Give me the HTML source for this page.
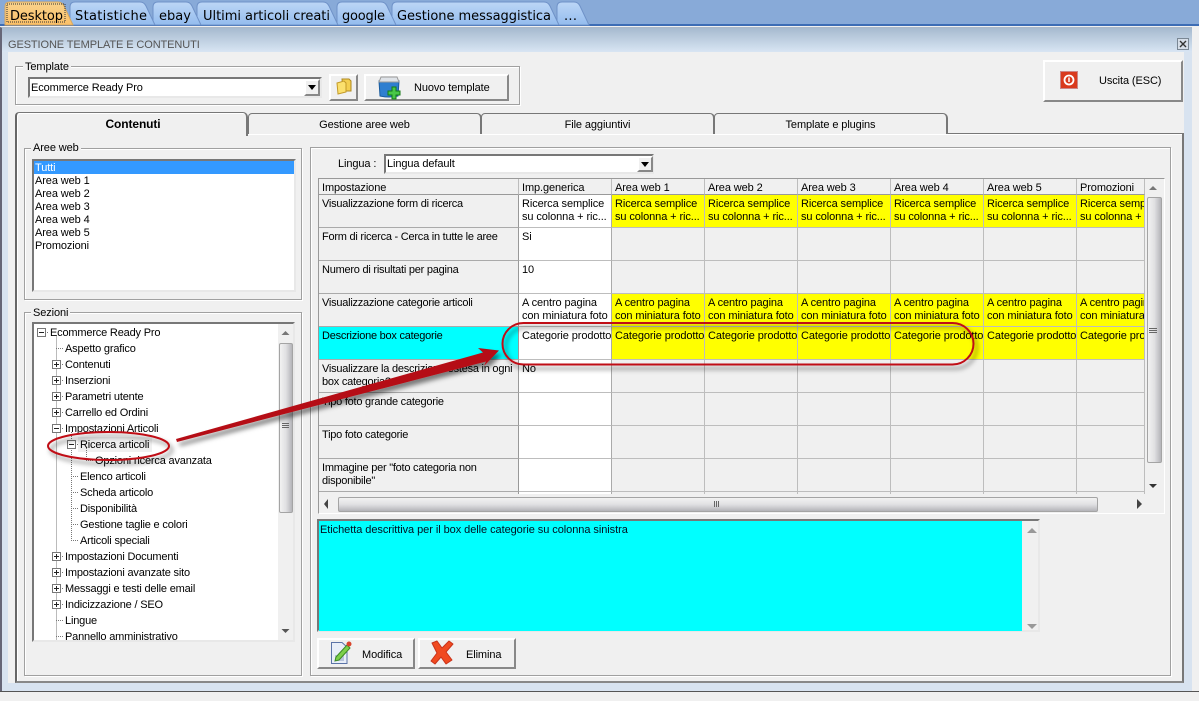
<!DOCTYPE html>
<html><head><meta charset="utf-8"><style>
html,body{margin:0;padding:0;width:1199px;height:701px;overflow:hidden;background:#f0f0f0}
body{position:relative;font:11px/13px "Liberation Sans",sans-serif;letter-spacing:-.1px;color:#000}
div,span.t{position:absolute;box-sizing:border-box}
.t{white-space:nowrap;padding-top:1px}
.grp{border:1px solid #a0a0a0;box-shadow:1px 1px 0 #fff,inset 1px 1px 0 #fff}
.lg{background:#f0f0f0;padding:1px 2px 0;height:13px}
.sunk{background:#fff;border:2px solid;border-color:#777 #e8e8e8 #e8e8e8 #777}
.btn{background:#f0f0f0;border:2px solid;border-color:#fff #888 #888 #fff}
.tab{background:#f0f0f0;border:1px solid #777;border-bottom:0;border-right:2px solid #777;border-radius:4px 5px 0 0;text-align:center;padding-top:5px}
.vthumb{background:linear-gradient(90deg,#f2f2f2,#e0e0e2 50%,#b4b4b9);border:1px solid #a4a4a4;border-radius:2px}
.hthumb{background:linear-gradient(180deg,#f2f2f2,#e0e0e2 50%,#b4b4b9);border:1px solid #a4a4a4;border-radius:2px}
table{border-collapse:separate;border-spacing:0;table-layout:fixed;position:absolute;left:0;top:0;width:826px}
td{height:33px;padding:3px 3px 0;vertical-align:top;border-right:1px solid #bdbdbd;border-bottom:1px solid #bdbdbd;overflow:hidden;white-space:nowrap;background:#f0f0f0;box-sizing:border-box}
tr.h td{height:16px;padding:3px 3px 0;line-height:12px;border-bottom:1px solid #999;border-right:1px solid #bdbdbd}
td.f{border-right:1px solid #999;border-bottom:1px solid #aaa;padding-right:0;letter-spacing:-.24px}
td.w{background:#fff;border-right-color:#aaa}
td.y{background:#ff0}
td.c{background:#0ff}
.tree .t{line-height:16px;height:17px;letter-spacing:-.18px}
</style></head><body>

<!-- top tabs -->
<div style="left:0;top:0;width:1199px;height:24px;background:#88aad8"></div>
<div style="left:0;top:24px;width:1199px;height:2px;background:#3d6db5"></div>
<svg style="position:absolute;left:0;top:0" width="600" height="26">
<defs>
<linearGradient id="tb" x1="0" y1="0" x2="0" y2="1"><stop offset="0" stop-color="#bcd6f6"/><stop offset="1" stop-color="#94bcee"/></linearGradient>
<linearGradient id="to" x1="0" y1="0" x2="0" y2="1"><stop offset="0" stop-color="#fad38c"/><stop offset="1" stop-color="#fbc068"/></linearGradient>
</defs>
<g fill="url(#tb)" stroke="#6f92c8">
<path d="M557 25V7Q557 2 562 2H574Q578 2 580 6L589 25Z"/>
<path d="M392 25V7Q392 2 397 2H544Q548 2 550 6L559 25Z"/>
<path d="M337 25V7Q337 2 342 2H381Q385 2 387 6L396 25Z"/>
<path d="M197 25V7Q197 2 202 2H323Q327 2 329 6L338 25Z"/>
<path d="M153 25V7Q153 2 158 2H186Q190 2 192 6L201 25Z"/>
<path d="M70 25V7Q70 2 75 2H140Q144 2 146 6L155 25Z"/>
</g>
<path d="M5 25V7Q5 2 10 2H58Q62 2 64 6L73 25Z" fill="url(#to)" stroke="#d7a860"/>
<rect x="7" y="4" width="58" height="18" fill="none" stroke="#333" stroke-dasharray="1 1"/>
<g font-family="DejaVu Sans,sans-serif" font-size="13" letter-spacing="0">
<text x="10" y="20" textLength="53">Desktop</text>
<text x="75" y="20" textLength="72">Statistiche</text>
<text x="159" y="20" textLength="32">ebay</text>
<text x="203" y="20" textLength="127">Ultimi articoli creati</text>
<text x="342" y="20" textLength="43">google</text>
<text x="397" y="20" textLength="154">Gestione messaggistica</text>
<text x="564" y="20" textLength="13">...</text>
</g>
</svg>

<!-- window -->
<div style="left:0;top:27px;width:1192px;height:664px;background:#d8e3f0;border-top:1px solid #aab8c8;border-left:2px solid #667"></div>
<div style="left:2px;top:28px;width:1190px;height:24px;background:linear-gradient(180deg,#a6bacf,#d8e5f3)"></div>
<div style="left:8px;top:52px;width:1176px;height:631px;background:#f0f0f0"></div>
<div style="left:0;top:691px;width:1199px;height:1px;background:#555"></div>
<span class="t" style="left:8px;top:38px;color:#555">GESTIONE TEMPLATE E CONTENUTI</span>
<svg style="position:absolute;left:1177px;top:38px" width="12" height="12"><rect x=".5" y=".5" width="11" height="11" fill="#d6dee8" stroke="#7a8794"/><path d="M3 3L9 9M9 3L3 9" stroke="#333" stroke-width="1.4"/></svg>

<!-- template group -->
<div class="grp" style="left:15px;top:66px;width:505px;height:39px"></div>
<span class="t lg" style="left:23px;top:60px">Template</span>
<div class="sunk" style="left:28px;top:77px;width:294px;height:21px"></div>
<span class="t" style="left:31px;top:81px">Ecommerce Ready Pro</span>
<div class="btn" style="left:304px;top:79px;width:16px;height:17px"></div>
<svg style="position:absolute;left:306px;top:81px" width="12" height="12"><path d="M2 4H10L6 9Z" fill="#000"/></svg>
<div class="btn" style="left:329px;top:74px;width:29px;height:27px"></div>
<svg style="position:absolute;left:335px;top:78px" width="18" height="19"><path d="M7 1H14L16 3V13H8Z" fill="#f3cf50" stroke="#b08a20"/><path d="M2 5L9 3L11 5V14L3 16Z" fill="#fbe06e" stroke="#c39a28"/></svg>
<div class="btn" style="left:364px;top:74px;width:145px;height:27px"></div>
<svg style="position:absolute;left:377px;top:75px" width="26" height="25"><path d="M2 6H22L21 21Q12 23 3 21Z" fill="#2f7fd0" stroke="#1a5c9e"/><path d="M4 2H20L22 7H2Z" fill="#dfe3e8" stroke="#999"/><path d="M15 12h4v4h4v4h-4v4h-4v-4h-4v-4h4z" fill="#48c848" stroke="#157a15"/></svg>
<span class="t" style="left:414px;top:81px">Nuovo template</span>
<div class="btn" style="left:1043px;top:60px;width:140px;height:42px"></div>
<svg style="position:absolute;left:1060px;top:71px" width="18" height="18"><rect x=".5" y=".5" width="17" height="17" fill="#d93a1e" stroke="#c88"/><circle cx="9" cy="9" r="4.5" fill="none" stroke="#fff" stroke-width="1.8"/><path d="M9 6.5V11" stroke="#fff" stroke-width="1.5"/></svg>
<span class="t" style="left:1099px;top:74px">Uscita (ESC)</span>

<!-- page tabs -->
<div style="left:15px;top:133px;width:1169px;height:550px;border:2px solid #777;border-top:1px solid #777;border-left:2px solid #666;border-bottom:2px solid #888;box-shadow:inset 1px 1px 0 #fff"></div>
<div class="tab" style="left:248px;top:113px;width:234px;height:21px">Gestione aree web</div>
<div class="tab" style="left:481px;top:113px;width:234px;height:21px">File aggiuntivi</div>
<div class="tab" style="left:714px;top:113px;width:234px;height:21px">Template e plugins</div>
<div class="tab" style="left:15px;top:112px;width:233px;height:24px;border-bottom:0;border-left:2px solid #666;font-weight:bold;font-size:12px;padding:5px 0 0 3px;box-shadow:inset 1px 1px 0 #fff;letter-spacing:-.1px">Contenuti</div>

<!-- left groups -->
<div class="grp" style="left:24px;top:148px;width:278px;height:152px"></div>
<span class="t lg" style="left:31px;top:141px">Aree web</span>
<div class="sunk" style="left:32px;top:159px;width:264px;height:133px"></div>
<div style="left:34px;top:161px;width:260px;height:13px;background:#3399ff"></div>
<span class="t" style="left:35px;top:161px;color:#fff">Tutti</span>
<span class="t" style="left:35px;top:174px">Area web 1</span>
<span class="t" style="left:35px;top:187px">Area web 2</span>
<span class="t" style="left:35px;top:200px">Area web 3</span>
<span class="t" style="left:35px;top:213px">Area web 4</span>
<span class="t" style="left:35px;top:226px">Area web 5</span>
<span class="t" style="left:35px;top:239px">Promozioni</span>

<div class="grp" style="left:24px;top:312px;width:278px;height:364px"></div>
<span class="t lg" style="left:31px;top:306px">Sezioni</span>

<div class="sunk tree" style="left:32px;top:322px;width:263px;height:320px;overflow:hidden"></div>
<div style="left:34px;top:324px;width:244px;height:316px;overflow:hidden;background:#fff" class="tree">
<div style="left:44px;top:113px;width:74px;height:15px;background:#f0f0f0"></div>
<svg style="position:absolute;left:-34px;top:-324px" width="300" height="660">
<g stroke="#777" stroke-dasharray="1 1" fill="none">
<path d="M56.500 336.500V640M45 332.500H49M56 348.500H64M60 364.500H64M60 380.500H64M60 396.500H64M60 412.500H64M60 428.500H64M60 556.500H64M60 572.500H64M60 588.500H64M60 604.500H64M56 620.500H64M56 636.500H64"/>
<path d="M71.500 432V540.500M75 444.500H79M86.500 448V460.500H94M71 476.500H79M71 492.500H79M71 508.500H79M71 524.500H79M71 540.500H79"/>
</g>
<g fill="#fff" stroke="#777">
<rect x="37.500" y="328.500" width="8" height="8"/>
<rect x="52.500" y="360.500" width="8" height="8"/><rect x="52.500" y="376.500" width="8" height="8"/><rect x="52.500" y="392.500" width="8" height="8"/><rect x="52.500" y="408.500" width="8" height="8"/><rect x="52.500" y="424.500" width="8" height="8"/>
<rect x="67.500" y="440.500" width="8" height="8"/>
<rect x="52.500" y="552.500" width="8" height="8"/><rect x="52.500" y="568.500" width="8" height="8"/><rect x="52.500" y="584.500" width="8" height="8"/><rect x="52.500" y="600.500" width="8" height="8"/>
</g>
<g stroke="#222" fill="none">
<path d="M39 332.500H44M54 364.500H59M54 380.500H59M54 396.500H59M54 412.500H59M54 428.500H59M69 444.500H74M54 556.500H59M54 572.500H59M54 588.500H59M54 604.500H59"/>
<path d="M56.500 362V367M56.500 378V383M56.500 394V399M56.500 410V415M56.500 554V559M56.500 570V575M56.500 586V591M56.500 602V607"/>
</g>
</svg>
<span class="t" style="left:16px;top:0">Ecommerce Ready Pro</span>
<span class="t" style="left:31px;top:16px">Aspetto grafico</span>
<span class="t" style="left:31px;top:32px">Contenuti</span>
<span class="t" style="left:31px;top:48px">Inserzioni</span>
<span class="t" style="left:31px;top:64px">Parametri utente</span>
<span class="t" style="left:31px;top:80px">Carrello ed Ordini</span>
<span class="t" style="left:31px;top:96px">Impostazioni Articoli</span>
<span class="t" style="left:46px;top:112px">Ricerca articoli</span>
<span class="t" style="left:61px;top:128px">Opzioni ricerca avanzata</span>
<span class="t" style="left:46px;top:144px">Elenco articoli</span>
<span class="t" style="left:46px;top:160px">Scheda articolo</span>
<span class="t" style="left:46px;top:176px">Disponibilità</span>
<span class="t" style="left:46px;top:192px">Gestione taglie e colori</span>
<span class="t" style="left:46px;top:208px">Articoli speciali</span>
<span class="t" style="left:31px;top:224px">Impostazioni Documenti</span>
<span class="t" style="left:31px;top:240px">Impostazioni avanzate sito</span>
<span class="t" style="left:31px;top:256px">Messaggi e testi delle email</span>
<span class="t" style="left:31px;top:272px">Indicizzazione / SEO</span>
<span class="t" style="left:31px;top:288px">Lingue</span>
<span class="t" style="left:31px;top:304px">Pannello amministrativo</span>
</div>
<div style="left:278px;top:324px;width:15px;height:316px;background:#f0f0f0"></div>
<div class="vthumb" style="left:279px;top:343px;width:14px;height:170px"></div>
<svg style="position:absolute;left:278px;top:324px" width="15" height="316"><path d="M3.500 11H11.500L7.500 7Z" fill="#777"/><path d="M3.500 305H11.500L7.500 309Z" fill="#555"/><path d="M4 99.500H11M4 101.500H11M4 103.500H11" stroke="#666"/></svg>

<!-- right group -->
<div class="grp" style="left:310px;top:147px;width:861px;height:529px"></div>
<span class="t" style="left:338px;top:157px">Lingua :</span>
<div class="sunk" style="left:384px;top:154px;width:270px;height:20px"></div>
<span class="t" style="left:387px;top:157px">Lingua default</span>
<div class="btn" style="left:637px;top:156px;width:16px;height:16px"></div>
<svg style="position:absolute;left:639px;top:158px" width="12" height="12"><path d="M2 4H10L6 9Z" fill="#000"/></svg>

<!-- grid -->
<div style="left:318px;top:178px;width:847px;height:336px;background:#f0f0f0;border:1px solid;border-color:#999 #fff #fff #999"></div>
<div style="left:319px;top:179px;width:826px;height:315px;overflow:hidden;background:#fff">
<table><colgroup><col style="width:200px"><col style="width:93px"><col style="width:93px"><col style="width:93px"><col style="width:93px"><col style="width:93px"><col style="width:93px"><col style="width:68px"></colgroup>
<tr class="h"><td>Impostazione</td><td>Imp.generica</td><td>Area web 1</td><td>Area web 2</td><td>Area web 3</td><td>Area web 4</td><td>Area web 5</td><td>Promozioni</td></tr>
<tr><td class="f">Visualizzazione form di ricerca</td><td class="w">Ricerca semplice<br>su colonna + ric...</td><td class="y">Ricerca semplice<br>su colonna + ric...</td><td class="y">Ricerca semplice<br>su colonna + ric...</td><td class="y">Ricerca semplice<br>su colonna + ric...</td><td class="y">Ricerca semplice<br>su colonna + ric...</td><td class="y">Ricerca semplice<br>su colonna + ric...</td><td class="y">Ricerca semplice<br>su colonna + ric...</td></tr>
<tr><td class="f">Form di ricerca - Cerca in tutte le aree</td><td class="w">Si</td><td></td><td></td><td></td><td></td><td></td><td></td></tr>
<tr><td class="f">Numero di risultati per pagina</td><td class="w">10</td><td></td><td></td><td></td><td></td><td></td><td></td></tr>
<tr><td class="f">Visualizzazione categorie articoli</td><td class="w">A centro pagina<br>con miniatura foto</td><td class="y">A centro pagina<br>con miniatura foto</td><td class="y">A centro pagina<br>con miniatura foto</td><td class="y">A centro pagina<br>con miniatura foto</td><td class="y">A centro pagina<br>con miniatura foto</td><td class="y">A centro pagina<br>con miniatura foto</td><td class="y">A centro pagina<br>con miniatura foto</td></tr>
<tr><td class="f c">Descrizione box categorie</td><td class="w">Categorie prodotto</td><td class="y">Categorie prodotto</td><td class="y">Categorie prodotto</td><td class="y">Categorie prodotto</td><td class="y">Categorie prodotto</td><td class="y">Categorie prodotto</td><td class="y">Categorie prodotto</td></tr>
<tr><td class="f">Visualizzare la descrizione estesa in ogni<br>box categoria?</td><td class="w">No</td><td></td><td></td><td></td><td></td><td></td><td></td></tr>
<tr><td class="f">Tipo foto grande categorie</td><td class="w"></td><td></td><td></td><td></td><td></td><td></td><td></td></tr>
<tr><td class="f">Tipo foto categorie</td><td class="w"></td><td></td><td></td><td></td><td></td><td></td><td></td></tr>
<tr><td class="f">Immagine per "foto categoria non<br>disponibile"</td><td class="w"></td><td></td><td></td><td></td><td></td><td></td><td></td></tr>
<tr><td class="f"></td><td class="w"></td><td></td><td></td><td></td><td></td><td></td><td></td></tr>
</table></div>
<div class="vthumb" style="left:1147px;top:197px;width:15px;height:266px"></div>
<div class="hthumb" style="left:338px;top:497px;width:760px;height:15px"></div>
<svg style="position:absolute;left:318px;top:178px" width="847" height="336"><path d="M831 12H839L835 8Z" fill="#777"/><path d="M831 306H839L835 310Z" fill="#333"/><path d="M831 150.500H839M831 152.500H839M831 154.500H839" stroke="#666"/><path d="M10 321V331L6 326Z" fill="#444"/><path d="M819 321V331L824 326Z" fill="#444"/><path d="M396.500 323V329M398.500 323V329M400.500 323V329" stroke="#666"/></svg>

<!-- memo -->
<div class="sunk" style="left:317px;top:519px;width:723px;height:113px;background:#f0f0f0"></div>
<div style="left:319px;top:521px;width:703px;height:110px;background:#0ff"></div>
<span class="t" style="left:320px;top:523px;font-size:11px;letter-spacing:-.06px;color:#012">Etichetta descrittiva per il box delle categorie su colonna sinistra</span>
<svg style="position:absolute;left:1022px;top:521px" width="17" height="110"><path d="M5 12H15L10 7Z" fill="#999"/><path d="M5 103H15L10 108Z" fill="#999"/></svg>

<!-- bottom buttons -->
<div class="btn" style="left:317px;top:638px;width:98px;height:31px"></div>
<svg style="position:absolute;left:330px;top:640px" width="24" height="26"><path d="M1.500 2.500H12L17 7V23.500H1.500Z" fill="#e8eef8" stroke="#5b74a8"/><rect x="5" y="15" width="9" height="6" fill="#b8c4dc"/><path d="M6 17L17 5L20 8L9 20L5 21Z" fill="#7cd04a" stroke="#3d8a24"/><circle cx="19" cy="4" r="2.500" fill="#d8452c"/></svg>
<span class="t" style="left:362px;top:648px">Modifica</span>
<div class="btn" style="left:418px;top:638px;width:98px;height:31px"></div>
<svg style="position:absolute;left:429px;top:640px" width="26" height="26"><path d="M3 3L8 1L13 8L20 1L24 4L17 12L23 20L17 24L12 17L6 24L2 21L8 13Z" fill="#f04a20" stroke="#c8321a" stroke-linejoin="round"/></svg>
<span class="t" style="left:466px;top:648px">Elimina</span>

<!-- annotations -->
<svg style="position:absolute;left:0;top:0" width="1199" height="701">
<defs><filter id="s" x="-10%" y="-30%" width="120%" height="170%"><feDropShadow dx="3" dy="4" stdDeviation="2.500" flood-color="#000" flood-opacity=".5"/></filter></defs>
<ellipse cx="108.500" cy="446" rx="60.500" ry="14" fill="none" stroke="#c00d14" stroke-width="2" filter="url(#s)"/>
<rect x="502.500" y="323" width="471" height="41.500" rx="21" fill="none" stroke="#c00d14" stroke-width="2" filter="url(#s)"/>
<path d="M176 439L177 442L486 361.500L484 366L499 350.500L478 348L483 352.500Z" fill="#b50f14" filter="url(#s)"/>
</svg>
</body></html>
